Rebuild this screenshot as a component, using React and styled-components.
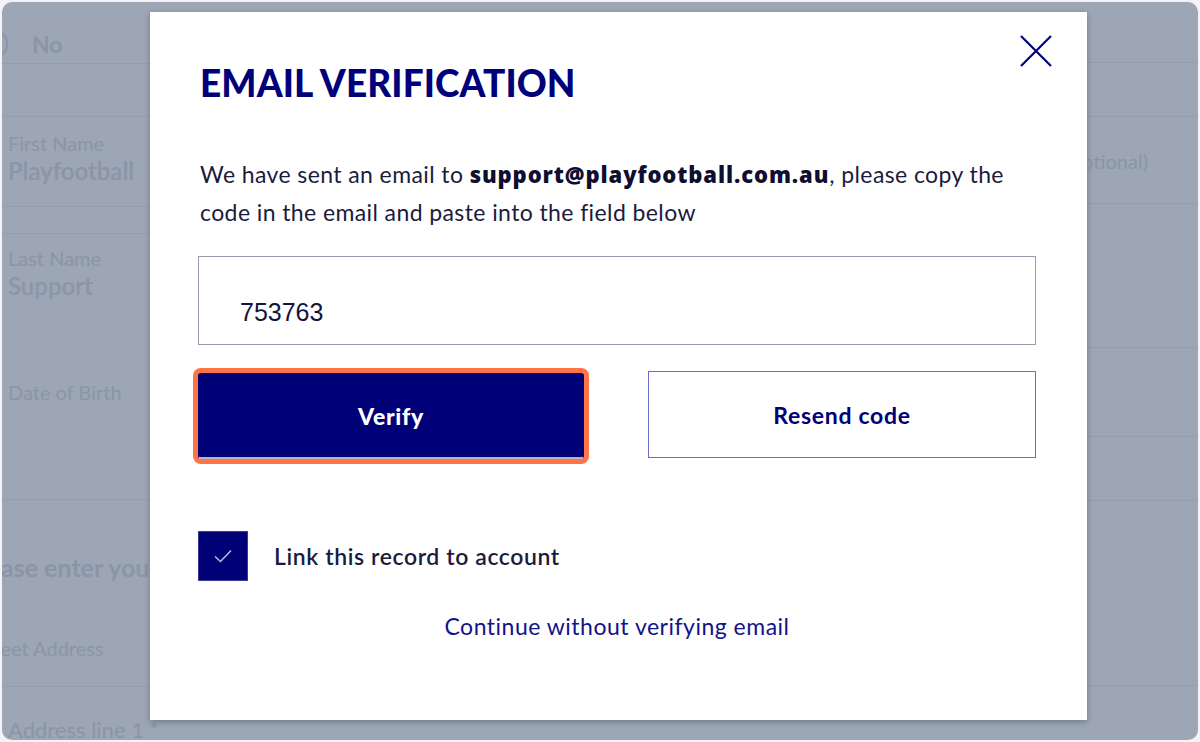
import React, { useState } from "react";
import styled, { createGlobalStyle } from "styled-components";

const GlobalStyle = createGlobalStyle`
  html, body {
    margin: 0;
    padding: 0;
    background: #f4f4f8;
    overflow: hidden;
  }
  * {
    box-sizing: border-box;
  }
`;

const Frame = styled.div`
  position: relative;
  margin: 2px;
  height: 738px;
  border-radius: 10px;
  background: #9ca6b5;
  overflow: hidden;
  font-family: Lato, "Noto Sans", sans-serif;
  color: #8b95a6;
`;

const Backdrop = styled.div`
  display: flex;
  justify-content: space-between;
  height: 100%;
`;

const Column = styled.div`
  display: flex;
  flex-direction: column;
  width: ${(p) => p.$width}px;
`;

const Row = styled.div`
  height: ${(p) => p.$h}px;
  flex-shrink: 0;
  border-bottom: ${(p) => (p.$line ? "1px solid #949eae" : "none")};
  padding-top: ${(p) => p.$pt || 0}px;
  padding-left: ${(p) => p.$pl || 0}px;
  display: flex;
  flex-direction: column;
  align-items: ${(p) => (p.$end ? "flex-end" : "stretch")};
`;

const Label = styled.div`
  font-size: 20px;
  line-height: 24px;
  white-space: nowrap;
`;

const Value = styled.div`
  font-size: 24px;
  line-height: 32px;
  font-weight: 600;
  white-space: nowrap;
`;

const Heading = styled.div`
  font-size: 25px;
  font-weight: 700;
  white-space: nowrap;
`;

const Radio = styled.div`
  display: flex;
  align-items: center;
  gap: 24px;
  margin-left: -24px;
  font-size: 23px;
  font-weight: 700;
`;

const RadioDot = styled.span`
  width: 30px;
  height: 30px;
  border-radius: 50%;
  border: 2px solid #8b95a6;
`;

const Modal = styled.div`
  position: absolute;
  left: 148px;
  top: 10px;
  width: 937px;
  height: 708px;
  background: #fff;
  box-shadow: 0 2px 6px rgba(30, 40, 60, 0.35);
  padding: 51px 51px 0 48px;
  font-family: Lato, "Noto Sans", sans-serif;
  color: #1b1b3e;
`;

const Close = styled.button`
  position: absolute;
  right: 34px;
  top: 22px;
  width: 34px;
  height: 34px;
  padding: 0;
  border: none;
  background: none;
  cursor: pointer;
`;

const Title = styled.h2`
  margin: 0 0 0 2px;
  font-size: 37px;
  line-height: 40px;
  font-weight: 900;
  color: #00007a;
  letter-spacing: 0.1px;
`;

const Intro = styled.p`
  margin: 52px 0 0 2px;
  font-size: 23px;
  line-height: 38px;
  letter-spacing: 0.4px;
  color: #1b1b3e;

  b {
    font-family: "Open Sans", Lato, sans-serif;
    font-size: 22px;
    font-weight: 800;
    color: #0e0e30;
    letter-spacing: 0.9px;
  }
`;

const CodeInput = styled.input`
  display: block;
  width: 100%;
  height: 89px;
  margin-top: 25px;
  padding: 24px 41px 0;
  border: 1px solid #9a9aaa;
  border-radius: 0;
  font-family: "Liberation Sans", Arial, sans-serif;
  font-size: 25px;
  color: #14143a;
  outline: none;
`;

const Actions = styled.div`
  display: grid;
  grid-template-columns: 386px 388px;
  justify-content: space-between;
  margin-top: 26px;
`;

const Button = styled.button`
  height: 87px;
  padding: 0;
  font-family: Lato, "Noto Sans", sans-serif;
  font-size: 23px;
  letter-spacing: 0.7px;
  font-weight: ${(p) => (p.$primary ? 900 : 700)};
  cursor: pointer;
  border-radius: 0;
  background: ${(p) => (p.$primary ? "#000077" : "#fff")};
  color: ${(p) => (p.$primary ? "#fff" : "#000077")};
  border: 1px solid ${(p) => (p.$primary ? "#000077" : "#6b6bcc")};
  outline: none;
  ${(p) =>
    p.$primary &&
    `
    margin-top: 2px;
    height: 86px;
    border-radius: 3px;
    border-bottom: 2px solid #b4b4c8;
    box-shadow: 0 0 0 5px #ff7447;
  `}
`;

const CheckRow = styled.label`
  display: flex;
  align-items: center;
  gap: 26px;
  margin-top: 72px;
  font-size: 23px;
  font-weight: 600;
  letter-spacing: 0.6px;
  color: #1b1b3e;
  cursor: pointer;
`;

const Box = styled.span`
  width: 50px;
  height: 50px;
  background: #000077;
  border: 1px solid #3a3a90;
  display: flex;
  align-items: center;
  justify-content: center;
`;

const SkipLink = styled.a`
  display: block;
  margin-top: 31px;
  text-align: center;
  font-size: 23px;
  letter-spacing: 0.5px;
  color: #13138a;
  text-decoration: none;
`;

export default function App() {
  const [code, setCode] = useState("753763");
  const [linked, setLinked] = useState(true);

  return (
    <>
      <GlobalStyle />
      <Frame>
        <Backdrop>
          <Column $width={180}>
            <Row $h={62} $line $pt={27}>
              <Radio>
                <RadioDot />
                No
              </Radio>
            </Row>
            <Row $h={53} $line />
            <Row $h={90} $line $pt={14} $pl={6}>
              <Label>First Name</Label>
              <Value>Playfootball</Value>
            </Row>
            <Row $h={27} $line />
            <Row $h={266} $line $pt={12} $pl={6}>
              <Label>Last Name</Label>
              <Value>Support</Value>
              <Label style={{ marginTop: 78 }}>Date of Birth</Label>
            </Row>
            <Row $h={187} $line $pt={52}>
              <Heading style={{ marginLeft: -36 }}>Please enter your</Heading>
              <Label style={{ marginLeft: -26, marginTop: 54 }}>
                Street Address
              </Label>
            </Row>
            <Row $h={60} $pt={30} $pl={6}>
              <Label style={{ fontSize: 22, lineHeight: "26px" }}>
                Address line 1 *
              </Label>
            </Row>
          </Column>
          <Column $width={200}>
            <Row $h={61} $line />
            <Row $h={54} $line />
            <Row $h={87} $line $pt={32} $end>
              <Label style={{ paddingRight: 50 }}>Middle Name (optional)</Label>
            </Row>
            <Row $h={144} $line />
            <Row $h={89} $line />
            <Row $h={64} $line />
            <Row $h={185} $line />
          </Column>
        </Backdrop>

        <Modal role="dialog">
          <Close aria-label="Close">
            <svg width="34" height="34" viewBox="0 0 34 34">
              <path
                d="M2 2 L32 32 M32 2 L2 32"
                stroke="#00007a"
                strokeWidth="2.2"
                fill="none"
              />
            </svg>
          </Close>
          <Title>EMAIL VERIFICATION</Title>
          <Intro>
            We have sent an email to <b>support@playfootball.com.au</b>, please
            copy the code in the email and paste into the field below
          </Intro>
          <CodeInput value={code} onChange={(e) => setCode(e.target.value)} />
          <Actions>
            <Button $primary>Verify</Button>
            <Button>Resend code</Button>
          </Actions>
          <CheckRow onClick={() => setLinked(!linked)}>
            <Box>
              {linked && (
                <svg width="20" height="16" viewBox="0 0 20 16">
                  <path
                    d="M2 8.5 L7.5 13.5 L18 2.5"
                    stroke="#b9b9e6"
                    strokeWidth="1.6"
                    fill="none"
                  />
                </svg>
              )}
            </Box>
            Link this record to account
          </CheckRow>
          <SkipLink href="#">Continue without verifying email</SkipLink>
        </Modal>
      </Frame>
    </>
  );
}
